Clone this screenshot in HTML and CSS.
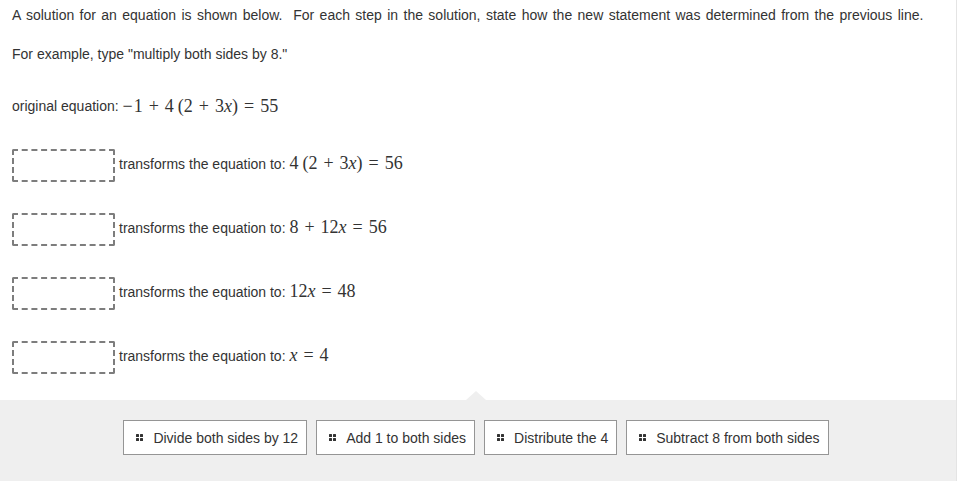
FILE: index.html
```html
<!DOCTYPE html>
<html>
<head>
<meta charset="utf-8">
<link rel="stylesheet" href="styles.css">
</head>
<body>
<div class="page">
  <div class="content">
    <p class="intro">A solution for an equation is shown below.&nbsp; For each step in the solution, state how the new statement was determined from the previous line.</p>
    <p class="example">For example, type "multiply both sides by 8."</p>
    <div class="original">original equation: <span class="math"><span class="op-l">−</span>1<span class="op">+</span>4<span class="sp"></span>(2<span class="op">+</span>3<i>x</i>)<span class="op">=</span>55</span></div>
    <div class="rows">
      <div class="row"><div class="drop"></div><span class="label">transforms the equation to: <span class="math">4<span class="sp"></span>(2<span class="op">+</span>3<i>x</i>)<span class="op">=</span>56</span></span></div>
      <div class="row"><div class="drop"></div><span class="label">transforms the equation to: <span class="math">8<span class="op">+</span>12<i>x</i><span class="op">=</span>56</span></span></div>
      <div class="row"><div class="drop"></div><span class="label">transforms the equation to: <span class="math">12<i>x</i><span class="op">=</span>48</span></span></div>
      <div class="row"><div class="drop"></div><span class="label">transforms the equation to: <span class="math"><i>x</i><span class="op">=</span>4</span></span></div>
    </div>
  </div>
  <div class="tray">
    <div class="pointer"></div>
    <div class="chip"><span class="grip"><i></i><i></i><i></i><i></i></span>Divide both sides by 12</div>
    <div class="chip"><span class="grip"><i></i><i></i><i></i><i></i></span>Add 1 to both sides</div>
    <div class="chip"><span class="grip"><i></i><i></i><i></i><i></i></span>Distribute the 4</div>
    <div class="chip"><span class="grip"><i></i><i></i><i></i><i></i></span>Subtract 8 from both sides</div>
  </div>
</div>
</body>
</html>
```
FILE: styles.css
```css
html, body {
  margin: 0;
  padding: 0;
  background: #ffffff;
}
body {
  font-family: "Liberation Sans", Arial, sans-serif;
  font-size: 14px;
  color: #333333;
}
.page {
  width: 956px;
  height: 481px;
  border-right: 1px solid #e4e4e4;
  display: flex;
  flex-direction: column;
  overflow: hidden;
}
.content {
  padding: 5px 12px 0 12px;
  display: flex;
  flex-direction: column;
}
.intro, .example {
  margin: 0;
  line-height: 20px;
}
.intro {
  word-spacing: 1.5px;
}
.example {
  margin-top: 19px;
}
.original {
  margin-top: 30px;
  height: 24px;
  line-height: 24px;
  display: flex;
  align-items: center;
  white-space: pre;
}
.math {
  font-family: "Liberation Serif", "Times New Roman", serif;
  font-size: 18px;
  color: #333;
  display: inline-flex;
  align-items: baseline;
}
.math i {
  font-style: italic;
}
.op {
  padding: 0 6px;
}
.op-l {
  padding-right: 1px;
}
.sp {
  display: inline-block;
  width: 4px;
}
.rows {
  margin-top: 30px;
  display: flex;
  flex-direction: column;
  gap: 30px;
}
.row {
  display: flex;
  align-items: center;
  height: 34px;
}
.drop {
  width: 99px;
  height: 29px;
  border: 2px dashed #7d7d7d;
  border-radius: 2px;
  flex: none;
}
.label {
  margin-left: 4px;
  display: inline-flex;
  align-items: center;
  white-space: pre;
  margin-top: -3px;
}
.tray {
  position: relative;
  margin-top: 26px;
  flex: 1;
  background: #efefef;
  display: flex;
  justify-content: center;
  align-items: flex-start;
  gap: 9px;
  padding-top: 20px;
  padding-right: 4px;
}
.pointer {
  position: absolute;
  left: 466px;
  top: -9px;
  width: 0;
  height: 0;
  border-left: 10px solid transparent;
  border-right: 10px solid transparent;
  border-bottom: 9px solid #efefef;
}
.chip {
  height: 33px;
  background: #ffffff;
  border: 1px solid #959595;
  display: flex;
  align-items: center;
  padding: 0 8px 0 12px;
  font-size: 14px;
  color: #333;
  white-space: nowrap;
}
.grip {
  display: grid;
  grid-template-columns: 3px 3px;
  grid-template-rows: 3px 3px;
  gap: 1px;
  margin-right: 10px;
}
.grip i {
  display: block;
  background: #333;
  width: 3px;
  height: 3px;
  border-radius: 0.5px;
}
```
